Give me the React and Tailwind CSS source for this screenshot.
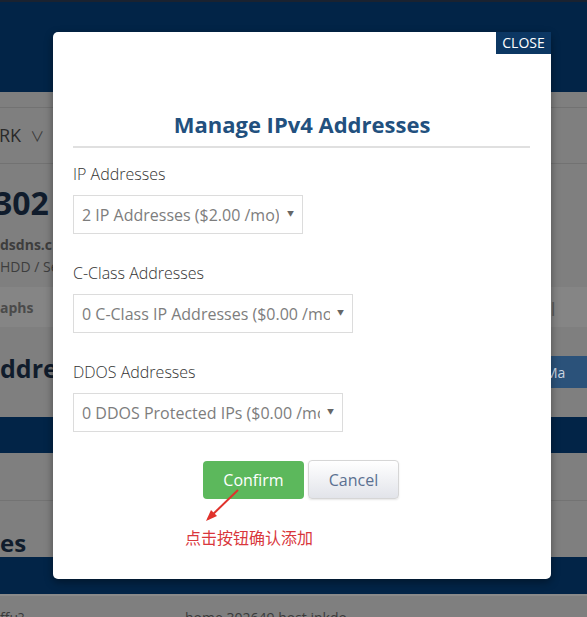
import { List } from 'lucide-react';

const font = { fontFamily: '"Open Sans", "Noto Sans CJK SC", sans-serif' };

function FakeSelect({ width, children }) {
  return (
    <div
      className="relative flex h-[39px] items-center border border-[#dcdcdc] bg-white pl-[8px] pr-[22px]"
      style={{ width }}
    >
      <span className="overflow-hidden whitespace-nowrap text-[16px] text-[#7d7d7d]">{children}</span>
      <span className="absolute right-[8px] top-[13px] text-[7px] text-[#666]">▼</span>
    </div>
  );
}

export default function App() {
  return (
    <div className="relative h-[617px] w-[587px] overflow-hidden bg-[#7f7f7f]" style={font}>
      {/* dimmed page behind the modal */}
      <div className="h-[2px] bg-[#1a2230]" />
      <div className="h-[90px] bg-[#022447]" />
      <div className="h-[15px]" />
      <div className="h-px bg-[#727272]" />
      <div className="flex h-[55px] items-center gap-[9px] text-[18px] text-[#2a2a2a]">
        <span className="-ml-[1px]">RK</span>
        <span className="text-[14px] text-[#3a3a3a]">∨</span>
      </div>
      <div className="h-px bg-[#727272]" />
      <div className="pt-[19px] text-[32px] font-bold leading-[40px] text-[#101c2c]">
        <span className="-ml-[6px]">302</span>
      </div>
      <div className="mt-[12px] text-[14px] font-bold leading-[20px] text-[#3d3d3d]">dsdns.c</div>
      <div className="mt-[2px] text-[14px] leading-[20px] text-[#3d3d3d]">HDD / Se</div>
      <div className="mt-[10px] flex h-[40px] items-center justify-between bg-[#858585] text-[14px] font-bold text-[#4a4a4a]">
        <span>aphs</span>
        <span className="mr-[30px] text-[#5a5a5a]">|</span>
      </div>
      <div className="flex h-[90px] items-start justify-between">
        <span className="pt-[25px] text-[25px] font-bold leading-[32px] text-[#101c2c]">ddres</span>
        <span className="mt-[29px] flex h-[32px] w-[66px] items-center gap-1 bg-[#2b527a] pl-[6px] text-[14px] text-[#c9d4e0]">
          <List size={14} />
          Ma
        </span>
      </div>
      <div className="h-[36px] bg-[#022447]" />
      <div className="h-[47px]" />
      <div className="h-px bg-[#737373]" />
      <div className="h-[56px] pt-[27px] text-[24px] font-bold leading-[30px] text-[#101c2c]">es</div>
      <div className="h-[37px] bg-[#022447]" />
      <div className="h-[2px] bg-[#8a8a8a]" />
      <div className="flex pt-[12px] text-[14px] leading-[20px] text-[#3a3a3a]">
        <span className="w-[185px]">ffu?</span>
        <span>home 302649 host inkdo</span>
      </div>

      {/* modal */}
      <div className="absolute left-[53px] top-[32px] h-[547px] w-[498px] rounded-[5px] bg-white shadow-[0_3px_9px_rgba(0,0,0,0.4)]">
        <button className="absolute right-0 top-0 h-[22px] w-[55px] bg-[#0c3763] text-[14px] leading-[22px] text-white">
          CLOSE
        </button>
        <div className="px-[20px] pt-[76px]">
          <h2 className="text-center text-[22px] font-bold leading-[32px] text-[#22507e]">
            Manage IPv4 Addresses
          </h2>
          <div className="mr-[1px] mt-[6px] h-[2px] bg-[#e0e0e0]" />

          <div className="mt-[15px] text-[16px] font-light leading-[22px] text-[#333]">IP Addresses</div>
          <div className="mt-[10px]">
            <FakeSelect width={230}>2 IP Addresses ($2.00 /mo)</FakeSelect>
          </div>

          <div className="mt-[28px] text-[16px] font-light leading-[22px] text-[#333]">C-Class Addresses</div>
          <div className="mt-[10px]">
            <FakeSelect width={280}>0 C-Class IP Addresses ($0.00 /mo)</FakeSelect>
          </div>

          <div className="mt-[28px] text-[16px] font-light leading-[22px] text-[#333]">DDOS Addresses</div>
          <div className="mt-[10px]">
            <FakeSelect width={270}>0 DDOS Protected IPs ($0.00 /mo)</FakeSelect>
          </div>

          <div className="mt-[28px] flex justify-center gap-[4px] pr-[2px]">
            <button className="mt-[1px] h-[38px] w-[101px] rounded-[4px] bg-[#5cb85c] text-[16px] text-white">
              Confirm
            </button>
            <button className="h-[39px] w-[91px] rounded-[4px] border border-[#d6d6d6] bg-gradient-to-b from-white to-[#e2e4ea] text-[16px] text-[#5b7091] shadow-[0_1px_2px_rgba(0,0,0,0.1)]">
              Cancel
            </button>
          </div>

          <div className="relative mt-[26px] pl-[112px]">
            <svg className="absolute left-[130px] top-[-40px]" width="40" height="40" viewBox="0 0 40 40">
              <line x1="35" y1="5" x2="5" y2="34" stroke="#e0322c" strokeWidth="2" />
              <polygon points="3,36 8,25 14,31" fill="#e0322c" />
            </svg>
            <span
              className="text-[16px] text-[#d9373c]"
              style={{ fontFamily: '"Noto Sans CJK SC", sans-serif' }}
            >
              点击按钮确认添加
            </span>
          </div>
        </div>
      </div>
    </div>
  );
}
